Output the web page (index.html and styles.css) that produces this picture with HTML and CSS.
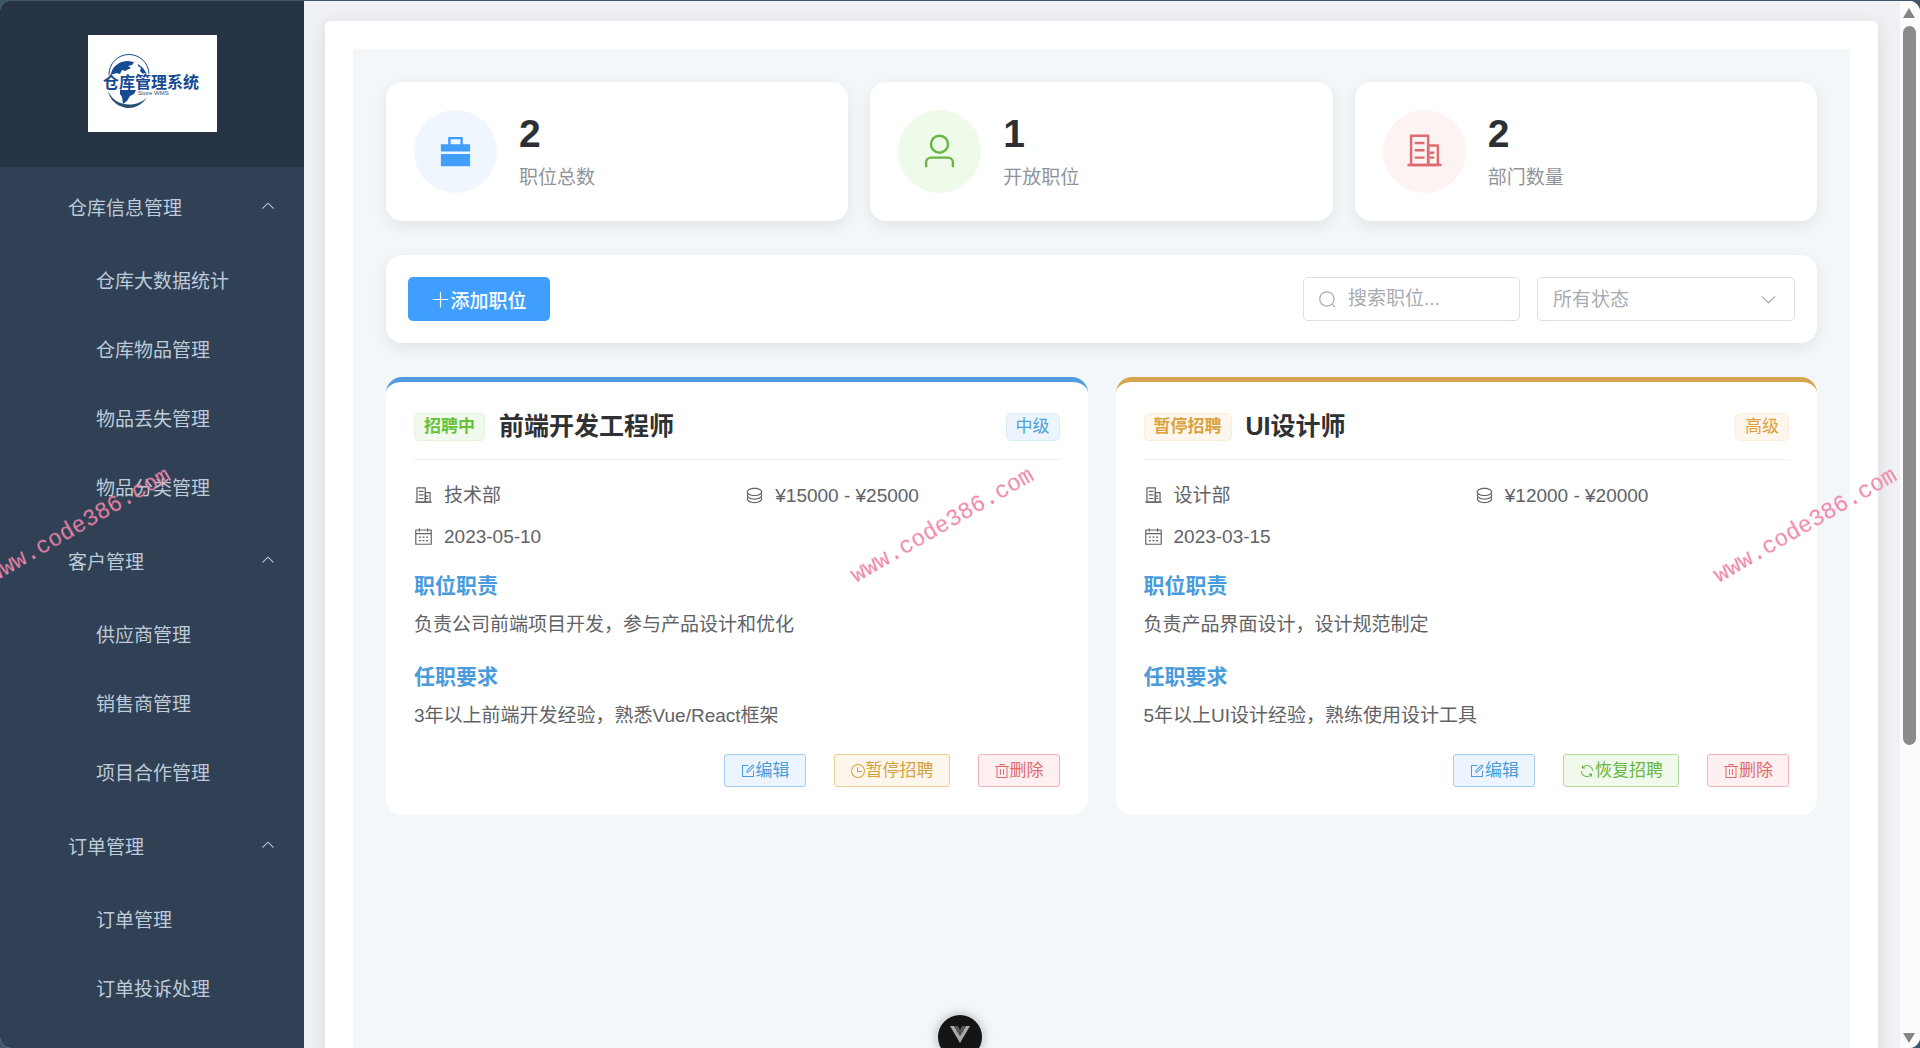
FILE: index.html
```html
<!DOCTYPE html>
<html lang="zh-CN">
<head>
    <meta charset="UTF-8">
    <meta name="viewport" content="width=device-width, initial-scale=1.0">
    <title>仓库管理系统</title>
    <link rel="stylesheet" href="styles.css">
</head>
<body>
    <!-- Icon sprite -->
    <svg class="sprite" aria-hidden="true">
        <symbol id="i-briefcase" viewBox="0 0 1024 1024"><path d="M320 320V128h384v192h192v192H128V320h192zM128 576h768v320H128V576zm256-256h256.064V192H384v128z"/></symbol>
        <symbol id="i-user" viewBox="0 0 1024 1024"><path d="M512 512a192 192 0 1 0 0-384 192 192 0 0 0 0 384zm0 64a256 256 0 1 1 0-512 256 256 0 0 1 0 512zm320 320v-96a96 96 0 0 0-96-96H288a96 96 0 0 0-96 96v96a32 32 0 1 1-64 0v-96a160 160 0 0 1 160-160h448a160 160 0 0 1 160 160v96a32 32 0 1 1-64 0z"/></symbol>
        <symbol id="i-office" viewBox="0 0 1024 1024"><path d="M192 128v704h384V128H192zm-32-64h448a32 32 0 0 1 32 32v768a32 32 0 0 1-32 32H160a32 32 0 0 1-32-32V96a32 32 0 0 1 32-32z"/><path d="M256 256h256v64H256v-64zm0 192h256v64H256v-64zm0 192h256v64H256v-64zm384-128h128v64H640v-64zm0 128h128v64H640v-64zM64 832h896v64H64v-64z"/><path d="M640 384v448h192V384H640zm-32-64h256a32 32 0 0 1 32 32v512a32 32 0 0 1-32 32H608a32 32 0 0 1-32-32V352a32 32 0 0 1 32-32z"/></symbol>
        <symbol id="i-coin" viewBox="0 0 1024 1024"><path d="m161.92 580.736 29.888 58.88C171.328 659.776 160 681.728 160 704c0 82.304 155.328 160 352 160s352-77.696 352-160c0-22.272-11.392-44.16-31.808-64.32l30.464-58.432C903.936 615.808 928 657.664 928 704c0 129.728-188.544 224-416 224S96 833.728 96 704c0-46.592 24.32-88.576 65.92-123.264z"/><path d="m161.92 388.736 29.888 58.88C171.328 467.84 160 489.792 160 512c0 82.304 155.328 160 352 160s352-77.696 352-160c0-22.272-11.392-44.16-31.808-64.32l30.464-58.432C903.936 423.808 928 465.664 928 512c0 129.728-188.544 224-416 224S96 641.728 96 512c0-46.592 24.32-88.576 65.92-123.264z"/><path d="M512 544c-227.456 0-416-94.272-416-224S284.544 96 512 96s416 94.272 416 224-188.544 224-416 224zm0-64c196.672 0 352-77.696 352-160S708.672 160 512 160s-352 77.696-352 160 155.328 160 352 160z"/></symbol>
        <symbol id="i-calendar" viewBox="0 0 1024 1024"><path d="M128 384v512h768V192H768v32a32 32 0 1 1-64 0v-32H320v32a32 32 0 0 1-64 0v-32H128v128h768v64H128zm192-256h384V96a32 32 0 1 1 64 0v32h160a32 32 0 0 1 32 32v768a32 32 0 0 1-32 32H96a32 32 0 0 1-32-32V160a32 32 0 0 1 32-32h160V96a32 32 0 0 1 64 0v32zm-32 384h64a32 32 0 0 1 0 64h-64a32 32 0 0 1 0-64zm0 192h64a32 32 0 1 1 0 64h-64a32 32 0 1 1 0-64zm192-192h64a32 32 0 0 1 0 64h-64a32 32 0 0 1 0-64zm0 192h64a32 32 0 1 1 0 64h-64a32 32 0 1 1 0-64zm192-192h64a32 32 0 1 1 0 64h-64a32 32 0 1 1 0-64zm0 192h64a32 32 0 1 1 0 64h-64a32 32 0 1 1 0-64z"/></symbol>
        <symbol id="i-edit" viewBox="0 0 1024 1024"><path d="M832 512a32 32 0 1 1 64 0v352a32 32 0 0 1-32 32H160a32 32 0 0 1-32-32V160a32 32 0 0 1 32-32h352a32 32 0 0 1 0 64H192v640h640V512z"/><path d="m469.952 554.24 52.8-7.552L847.104 222.4a32 32 0 1 0-45.248-45.248L477.44 501.44l-7.552 52.8zm422.4-422.4a96 96 0 0 1 0 135.808l-331.84 331.84a32 32 0 0 1-18.112 9.088L436.8 623.68a32 32 0 0 1-36.224-36.224l15.104-105.6a32 32 0 0 1 9.024-18.112l331.904-331.84a96 96 0 0 1 135.744 0z"/></symbol>
        <symbol id="i-clock" viewBox="0 0 1024 1024"><path d="M512 896a384 384 0 1 0 0-768 384 384 0 0 0 0 768zm0 64a448 448 0 1 1 0-896 448 448 0 0 1 0 896z"/><path d="M480 256a32 32 0 0 1 32 32v256a32 32 0 0 1-64 0V288a32 32 0 0 1 32-32z"/><path d="M480 512h256q32 0 32 32t-32 32H480q-32 0-32-32t32-32z"/></symbol>
        <symbol id="i-delete" viewBox="0 0 1024 1024"><path d="M160 256H96a32 32 0 0 1 0-64h256V95.936a32 32 0 0 1 32-32h256a32 32 0 0 1 32 32V192h256a32 32 0 1 1 0 64h-64v672a32 32 0 0 1-32 32H192a32 32 0 0 1-32-32V256zm448-64v-64H416v64h192zM224 896h576V256H224v640zm192-128a32 32 0 0 1-32-32V416a32 32 0 0 1 64 0v320a32 32 0 0 1-32 32zm192 0a32 32 0 0 1-32-32V416a32 32 0 0 1 64 0v320a32 32 0 0 1-32 32z"/></symbol>
        <symbol id="i-refresh" viewBox="0 0 1024 1024"><path d="M771.776 794.88A384 384 0 0 1 128 512h64a320 320 0 0 0 555.712 216.448H654.72a32 32 0 1 1 0-64h149.056a32 32 0 0 1 32 32v148.928a32 32 0 1 1-64 0v-50.56zM276.288 295.616h92.992a32 32 0 0 1 0 64H220.16a32 32 0 0 1-32-32V178.56a32 32 0 0 1 64 0v50.56A384 384 0 0 1 896.128 512h-64a320 320 0 0 0-555.776-216.384z"/></symbol>
        <symbol id="i-search" viewBox="0 0 1024 1024"><path d="m795.904 750.72 124.992 124.928a32 32 0 0 1-45.248 45.248L750.656 795.904a416 416 0 1 1 45.248-45.248zM480 832a352 352 0 1 0 0-704 352 352 0 0 0 0 704z"/></symbol>
        <symbol id="i-plus" viewBox="0 0 1024 1024"><path d="M480 480V128a32 32 0 0 1 64 0v352h352a32 32 0 1 1 0 64H544v352a32 32 0 1 1-64 0V544H128a32 32 0 0 1 0-64h352z"/></symbol>
        <symbol id="i-arrow" viewBox="0 0 1024 1024"><path d="M831.872 340.864 512 652.672 192.128 340.864a30.592 30.592 0 0 0-42.752 0 29.12 29.12 0 0 0 0 41.6L489.664 714.24a32 32 0 0 0 44.672 0l340.288-331.712a29.12 29.12 0 0 0 0-41.728 30.592 30.592 0 0 0-42.752 0z"/></symbol>
    </svg>

    <div class="app">
        <aside class="sidebar">
            <div class="logo">
                <svg class="logo-img" viewBox="0 0 129 97" role="img" aria-label="仓库管理系统">
                    <rect width="129" height="97" fill="#fff"/>
                    <path d="M21 40a20 20 0 0 1 40-1" fill="none" stroke="#164a91" stroke-width="1"/>
                    <path d="M20 56a21 21 0 0 0 39 6c-8 10-31 12-39-6z" fill="#27506f"/>
                    <path d="M23 39c1-7 8-13 17-13l6 1-2 3-4 1 3 2-6 3-3-1-2 4-4-1-2 1z" fill="#164a91"/>
                    <path d="M50 29l5 4 4 6-3-1-1 1-3-3 1-3-3-2z" fill="#164a91"/>
                    <path d="M32 55h16l-2 4-4 2-3 5-4 3-1-7-2-3z" fill="#164a91"/>
                    <text x="15" y="53" class="logo-name">仓库管理系统</text>
                    <text x="50" y="60" class="logo-sub">Store WMS</text>
                </svg>
            </div>
            <nav class="menu">
                <button type="button" class="menu-title">仓库信息管理<svg class="icon flip"><use href="#i-arrow"/></svg></button>
                <a href="#stats" class="menu-item">仓库大数据统计</a>
                <a href="#goods" class="menu-item">仓库物品管理</a>
                <a href="#lost" class="menu-item">物品丢失管理</a>
                <a href="#category" class="menu-item">物品分类管理</a>
                <button type="button" class="menu-title">客户管理<svg class="icon flip"><use href="#i-arrow"/></svg></button>
                <a href="#supplier" class="menu-item">供应商管理</a>
                <a href="#seller" class="menu-item">销售商管理</a>
                <a href="#project" class="menu-item">项目合作管理</a>
                <button type="button" class="menu-title">订单管理<svg class="icon flip"><use href="#i-arrow"/></svg></button>
                <a href="#order" class="menu-item">订单管理</a>
                <a href="#complaint" class="menu-item">订单投诉处理</a>
            </nav>
        </aside>

        <main class="main">
            <div class="panel">
                <div class="page">
                    <!-- Totals -->
                    <section class="stats">
                        <div class="stat">
                            <div class="stat-icon blue"><svg class="icon"><use href="#i-briefcase"/></svg></div>
                            <div>
                                <div class="stat-value">2</div>
                                <div class="stat-label">职位总数</div>
                            </div>
                        </div>
                        <div class="stat">
                            <div class="stat-icon green"><svg class="icon"><use href="#i-user"/></svg></div>
                            <div>
                                <div class="stat-value">1</div>
                                <div class="stat-label">开放职位</div>
                            </div>
                        </div>
                        <div class="stat">
                            <div class="stat-icon red"><svg class="icon"><use href="#i-office"/></svg></div>
                            <div>
                                <div class="stat-value">2</div>
                                <div class="stat-label">部门数量</div>
                            </div>
                        </div>
                    </section>

                    <!-- Search and filter -->
                    <section class="toolbar">
                        <button type="button" class="add-btn"><svg class="icon"><use href="#i-plus"/></svg>添加职位</button>
                        <div class="filters">
                            <label class="field search">
                                <svg class="icon"><use href="#i-search"/></svg>
                                <input type="text" placeholder="搜索职位..." aria-label="搜索职位">
                            </label>
                            <label class="field status">
                                <select aria-label="所有状态">
                                    <option>所有状态</option>
                                    <option>招聘中</option>
                                    <option>暂停招聘</option>
                                </select>
                                <svg class="icon"><use href="#i-arrow"/></svg>
                            </label>
                        </div>
                    </section>

                    <!-- Job list -->
                    <section class="jobs">
                        <article class="job open">
                            <header class="job-head">
                                <span class="tag success bold">招聘中</span>
                                <h2>前端开发工程师</h2>
                                <span class="tag primary">中级</span>
                            </header>
                            <div class="job-info">
                                <div><svg class="icon"><use href="#i-office"/></svg>技术部</div>
                                <div><svg class="icon"><use href="#i-coin"/></svg>¥15000 - ¥25000</div>
                                <div><svg class="icon"><use href="#i-calendar"/></svg>2023-05-10</div>
                            </div>
                            <div class="job-text">
                                <h3>职位职责</h3>
                                <p>负责公司前端项目开发，参与产品设计和优化</p>
                            </div>
                            <div class="job-text">
                                <h3>任职要求</h3>
                                <p>3年以上前端开发经验，熟悉Vue/React框架</p>
                            </div>
                            <footer class="job-actions">
                                <button type="button" class="btn primary"><svg class="icon"><use href="#i-edit"/></svg>编辑</button>
                                <button type="button" class="btn warning"><svg class="icon"><use href="#i-clock"/></svg>暂停招聘</button>
                                <button type="button" class="btn danger"><svg class="icon"><use href="#i-delete"/></svg>删除</button>
                            </footer>
                        </article>
                        <article class="job paused">
                            <header class="job-head">
                                <span class="tag warning bold">暂停招聘</span>
                                <h2>UI设计师</h2>
                                <span class="tag warning">高级</span>
                            </header>
                            <div class="job-info">
                                <div><svg class="icon"><use href="#i-office"/></svg>设计部</div>
                                <div><svg class="icon"><use href="#i-coin"/></svg>¥12000 - ¥20000</div>
                                <div><svg class="icon"><use href="#i-calendar"/></svg>2023-03-15</div>
                            </div>
                            <div class="job-text">
                                <h3>职位职责</h3>
                                <p>负责产品界面设计，设计规范制定</p>
                            </div>
                            <div class="job-text">
                                <h3>任职要求</h3>
                                <p>5年以上UI设计经验，熟练使用设计工具</p>
                            </div>
                            <footer class="job-actions">
                                <button type="button" class="btn primary"><svg class="icon"><use href="#i-edit"/></svg>编辑</button>
                                <button type="button" class="btn success"><svg class="icon"><use href="#i-refresh"/></svg>恢复招聘</button>
                                <button type="button" class="btn danger"><svg class="icon"><use href="#i-delete"/></svg>删除</button>
                            </footer>
                        </article>
                    </section>
                </div>
            </div>
        </main>

        <div class="scrollbar" aria-hidden="true">
            <span class="arrow-up"></span>
            <div class="track"><div class="thumb"></div></div>
            <span class="arrow-down"></span>
        </div>
    </div>

    <!-- Devtools toggle -->
    <button type="button" class="devtools" aria-label="Vue DevTools">
        <svg viewBox="0 0 20 17"><path d="M0 0h4l6 10 6-10h4L10 17z" fill="#a9a9a9"/><path d="M4 0h4l2 4 2-4h4l-6 10z" fill="#555"/></svg>
    </button>

    <div class="watermarks" aria-hidden="true">
        <span>www.code386.com</span>
        <span>www.code386.com</span>
        <span>www.code386.com</span>
    </div>
</body>
</html>
```
FILE: styles.css
```css
* {
    margin: 0;
    padding: 0;
    box-sizing: border-box;
}
body {
    height: 100vh;
    overflow: hidden;
    padding-top: 1px;
    background: #3f566a;
    font-family: "Liberation Sans", "Noto Sans CJK SC", sans-serif;
    font-size: 19px;
    color: #606266;
}
button, input, select {
    font: inherit;
    color: inherit;
}
button {
    cursor: pointer;
}
.sprite {
    display: none;
}
.icon {
    width: 19px;
    height: 19px;
    fill: currentColor;
    flex-shrink: 0;
}
.app {
    display: flex;
    height: 100%;
    border-radius: 11px;
    overflow: hidden;
    background: #eff1f5;
}

/* Sidebar */
.sidebar {
    width: 304px;
    flex-shrink: 0;
    background: #304156;
    overflow: hidden;
}
.logo {
    display: flex;
    justify-content: center;
    height: 166px;
    padding-top: 34px;
    background: #263445;
}
.logo-img {
    width: 129px;
    height: 97px;
}
.logo-name {
    font-family: "Noto Sans CJK SC", sans-serif;
    font-size: 16px;
    font-weight: bold;
    fill: #164a91;
}
.logo-sub {
    font-size: 6px;
    fill: #27506f;
}
.menu {
    display: flex;
    flex-direction: column;
}
.menu-title,
.menu-item {
    display: flex;
    align-items: center;
    color: #bfcbd9;
    text-decoration: none;
    background: none;
    border: 0;
}
.menu-title {
    justify-content: space-between;
    height: 78px;
    padding: 0 28px 0 68px;
}
.menu-title .icon {
    width: 16px;
    height: 16px;
}
.menu-item {
    height: 69px;
    padding-left: 96px;
}
.flip {
    transform: rotate(180deg);
}

/* Content */
.main {
    flex: 1;
    min-width: 0;
    padding: 20px 22px 0 21px;
    overflow: hidden;
}
.panel {
    min-height: 100%;
    padding: 28px;
    background: #fff;
    border-radius: 5px;
    box-shadow: 0 3px 17px rgba(0, 0, 0, 0.1);
}
.page {
    display: flex;
    flex-direction: column;
    gap: 34px;
    min-height: 100vh;
    padding: 33px;
    background: #f4f7fa;
}
.stats {
    display: grid;
    grid-template-columns: repeat(3, 1fr);
    gap: 22px;
}
.stat {
    display: flex;
    align-items: center;
    gap: 22px;
    padding: 28px;
    background: #fff;
    border-radius: 16px;
    box-shadow: 0 5px 16px rgba(0, 0, 0, 0.08);
}
.stat-icon {
    display: flex;
    align-items: center;
    justify-content: center;
    width: 83px;
    height: 83px;
    border-radius: 50%;
}
.stat-icon .icon {
    width: 39px;
    height: 39px;
}
.stat-icon.blue {
    color: #409eff;
    background: #eff6fe;
}
.stat-icon.green {
    color: #67b742;
    background: #eefaea;
}
.stat-icon.red {
    color: #dd6b6f;
    background: #fdf3f3;
}
.stat-value {
    font-size: 39px;
    font-weight: bold;
    line-height: 46px;
    color: #2c2f33;
}
.stat-label {
    line-height: 29px;
    margin-top: 6px;
    color: #909399;
}

/* Toolbar */
.toolbar {
    display: flex;
    align-items: center;
    justify-content: space-between;
    padding: 22px;
    background: #fff;
    border-radius: 16px;
    box-shadow: 0 5px 16px rgba(0, 0, 0, 0.08);
}
.add-btn {
    display: flex;
    align-items: center;
    justify-content: center;
    width: 142px;
    height: 44px;
    font-weight: 500;
    color: #fff;
    background: #409eff;
    border: 0;
    border-radius: 5px;
}
.filters {
    display: flex;
    gap: 17px;
}
.field {
    position: relative;
    display: flex;
    align-items: center;
    height: 44px;
    border: 1px solid #dcdfe6;
    border-radius: 5px;
    color: #a8abb2;
}
.field input,
.field select {
    flex: 1;
    min-width: 0;
    height: 100%;
    border: 0;
    outline: 0;
    background: none;
    appearance: none;
}
.field input::placeholder {
    color: #a8abb2;
}
.search {
    width: 217px;
    gap: 11px;
    padding: 0 14px;
}
.status {
    width: 258px;
}
.status select {
    padding-left: 15px;
}
.status .icon {
    position: absolute;
    right: 16px;
    pointer-events: none;
}

/* Job cards */
.jobs {
    display: grid;
    grid-template-columns: repeat(2, 1fr);
    gap: 28px;
}
.job {
    padding: 28px;
    background: #fff;
    border-top: 5px solid #4f9bdf;
    border-radius: 16px;
}
.job.paused {
    border-top-color: #d6a54f;
}
.job-head {
    display: flex;
    align-items: center;
    gap: 14px;
    padding-bottom: 16px;
    border-bottom: 1px solid #ebeef5;
}
.job-head h2 {
    flex: 1;
    font-size: 25px;
    line-height: 33px;
    color: #303133;
}
.tag {
    height: 28px;
    padding: 0 9px;
    font-size: 17px;
    line-height: 26px;
    border: 1px solid;
    border-radius: 5px;
}
.tag.bold {
    font-weight: bold;
}
.tag.primary {
    color: #4f9fd8;
    background: #ecf5fd;
    border-color: #d9ecf8;
}
.tag.success {
    color: #67c23a;
    background: #f0f9eb;
    border-color: #e1f3d8;
}
.tag.warning {
    color: #dba23c;
    background: #fdf6ec;
    border-color: #faecd8;
}
.job-info {
    display: grid;
    grid-template-columns: repeat(2, 1fr);
    gap: 14px 17px;
    margin: 22px 0;
}
.job-info div {
    display: flex;
    align-items: center;
    gap: 11px;
    line-height: 27px;
}
.job-text {
    margin-bottom: 24px;
}
.job-text h3 {
    margin-bottom: 11px;
    font-size: 21px;
    line-height: 27px;
    color: #4a9bdc;
}
.job-text p {
    line-height: 29px;
}
.job-actions {
    display: flex;
    justify-content: flex-end;
    gap: 28px;
}
.btn {
    display: flex;
    align-items: center;
    height: 33px;
    padding: 0 15px;
    font-size: 17px;
    line-height: 31px;
    border: 1px solid;
    border-radius: 3px;
}
.btn .icon {
    width: 16px;
    height: 16px;
}
.btn.primary {
    color: #4a9bdc;
    background: #ecf5ff;
    border-color: #a3cdea;
}
.btn.success {
    color: #67b742;
    background: #f0f9eb;
    border-color: #b3dd9f;
}
.btn.warning {
    color: #d6a23f;
    background: #fdf6ec;
    border-color: #ecd092;
}
.btn.danger {
    color: #e06c6c;
    background: #fef0f0;
    border-color: #ecb4b4;
}

/* Scrollbar */
.scrollbar {
    display: flex;
    flex-direction: column;
    align-items: center;
    width: 20px;
    padding: 7px 2px 5px 0;
    background: #fcfcfc;
}
.track {
    flex: 1;
    width: 13px;
    margin: 8px 0;
}
.thumb {
    height: 72%;
    background: #8a8c8b;
    border-radius: 7px;
}
.arrow-up,
.arrow-down {
    border: 6px solid transparent;
}
.arrow-up {
    border-top: 0;
    border-bottom: 10px solid #858585;
}
.arrow-down {
    border-bottom: 0;
    border-top: 10px solid #858585;
}

/* Overlays */
.devtools {
    position: fixed;
    left: 50%;
    bottom: -11px;
    width: 44px;
    height: 44px;
    transform: translateX(-50%);
    background: #121416;
    border: 0;
    border-radius: 50%;
    box-shadow: 0 0 12px rgba(0, 0, 0, 0.3);
}
.devtools svg {
    width: 20px;
    height: 17px;
}
.watermarks {
    position: fixed;
    top: 512px;
    left: -24px;
    right: 11px;
    display: flex;
    justify-content: space-between;
    pointer-events: none;
}
.watermarks span {
    font-family: "Liberation Mono", monospace;
    font-size: 23px;
    line-height: 28px;
    color: #ee82a6;
    transform: rotate(-30deg);
}
```
